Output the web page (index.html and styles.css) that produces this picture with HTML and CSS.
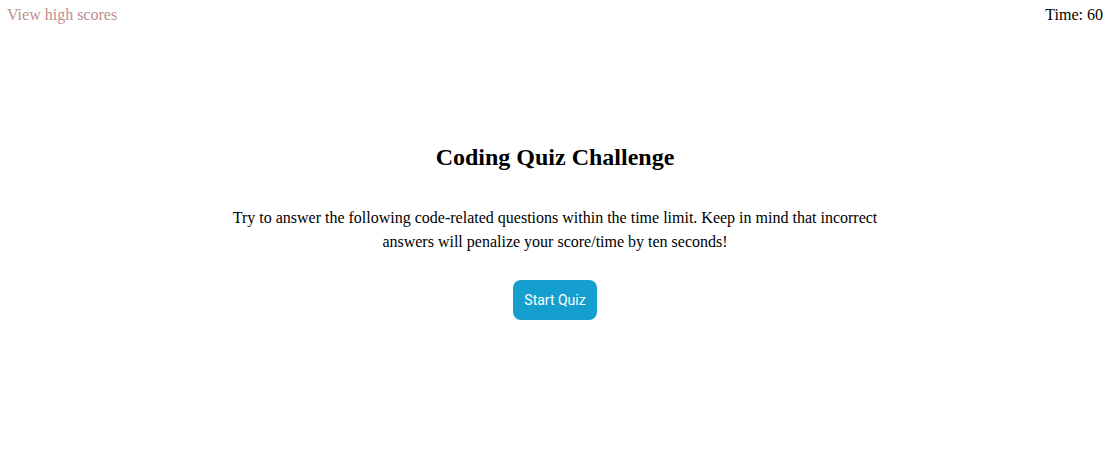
FILE: index.html
```html
<!DOCTYPE html>
<html>
<head>
<meta charset="utf-8">
<link rel="stylesheet" href="styles.css">
</head>
<body>
<header class="topbar">
  <a class="scores" href="#">View high scores</a>
  <span class="timer">Time: 60</span>
</header>
<main class="intro">
  <h2 class="title">Coding Quiz Challenge</h2>
  <p class="desc">Try to answer the following code-related questions within the time limit. Keep in mind that incorrect answers will penalize your score/time by ten seconds!</p>
  <button class="start">Start Quiz</button>
</main>
</body>
</html>
```
FILE: styles.css
```css
html, body { margin: 0; padding: 0; background: #fff; }
body { font-family: "Liberation Serif", "Times New Roman", serif; font-size: 16px; color: #000; }
.topbar { display: flex; justify-content: space-between; padding: 6px 7px 0 7px; line-height: 18px; }
.scores { color: #bc8f8f; text-decoration: none; }
.timer { color: #000; }
.intro { display: flex; flex-direction: column; align-items: center; text-align: center; padding-top: 119px; }
.title { font-size: 24px; font-weight: bold; margin: 0; line-height: 28px; }
.desc { width: 660px; margin: 35px 0 0 0; line-height: 24px; }
.start { margin-top: 26px; background: #149fcf; color: #fff; border: none; border-radius: 8px; width: 84px; height: 40px; font-family: Roboto, "Liberation Sans", sans-serif; font-size: 14px; padding: 0; }
```
